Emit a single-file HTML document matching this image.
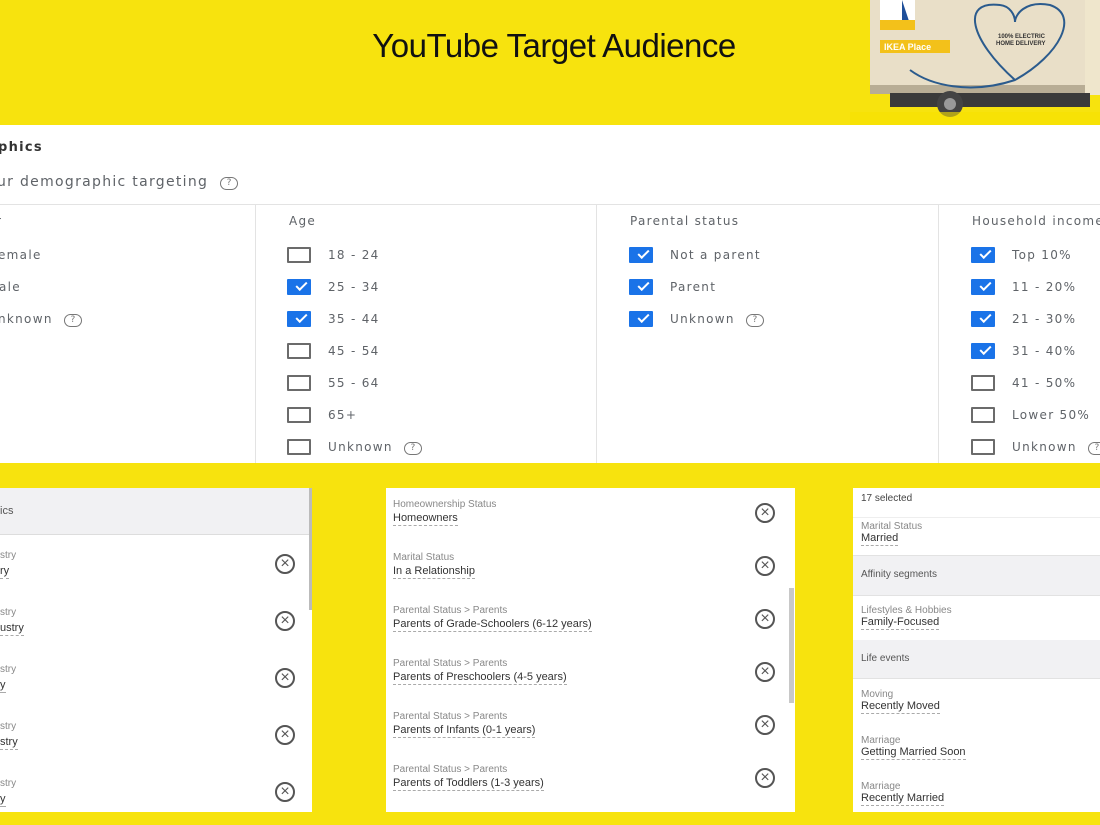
<!DOCTYPE html>
<html><head><style>
body{margin:0;width:1100px;height:825px;overflow:hidden;background:#f7e30e;font-family:"DejaVu Sans","Liberation Sans",sans-serif;position:relative}
.a{position:absolute}
.t{position:absolute;font-size:12px;color:#5f6368;letter-spacing:1.3px;white-space:nowrap}
.cb{position:absolute;width:24px;height:16px;border:2px solid #6b6b6b;border-radius:1px;box-sizing:border-box}
.cb.on{background:#1a73e8;border-color:#1a73e8}
.cb.on:after{content:"";position:absolute;left:7px;top:1px;width:9px;height:4px;border-left:2px solid #fff;border-bottom:2px solid #fff;transform:rotate(-45deg)}
.q{display:inline-block;width:16px;height:11px;border:1.5px solid #777;border-radius:7px;font-size:9px;line-height:11px;text-align:center;letter-spacing:0;vertical-align:1px;margin-left:6px;color:#777}
.s{position:absolute;font-family:"Liberation Sans",sans-serif;font-size:10px;color:#888;white-space:nowrap}
.v{position:absolute;font-family:"Liberation Sans",sans-serif;font-size:11px;color:#333;white-space:nowrap;border-bottom:1px dashed #aaa;padding-bottom:1px}
.x{position:absolute;width:16px;height:16px;border:2px solid #555;border-radius:50%;font-family:"Liberation Sans",sans-serif;font-size:16px;line-height:15px;text-align:center;color:#555}
.gr{position:absolute;background:#f1f1f3}
</style></head><body>
<div class="a" style="left:0;top:27px;width:1108px;text-align:center;font-family:'Liberation Sans',sans-serif;font-size:33px;color:#111;letter-spacing:-0.5px">YouTube Target Audience</div>
<!-- truck -->
<svg class="a" style="left:850px;top:0" width="250" height="125">
<rect x="20" y="0" width="230" height="93" fill="#e9dfc8"/>
<rect x="20" y="85" width="215" height="9" fill="#b8ad95"/>
<rect x="30" y="0" width="35" height="28" fill="#fff"/><path d="M52 0v20h-22l32 10z" fill="#1f4f99"/><path d="M30 20h35v10h-35z" fill="#f3c11a"/>
<rect x="30" y="40" width="70" height="13" fill="#f3c11a"/><text x="34" y="50" font-size="9" font-weight="bold" fill="#fff" font-family="Liberation Sans">IKEA Place</text>
<path d="M165 80 C120 40 110 0 150 5 C160 6 165 15 165 22 C165 15 175 0 200 5 C230 15 210 55 165 80 C120 95 80 85 60 70" fill="none" stroke="#2b5b8d" stroke-width="2"/>
<text x="148" y="38" font-size="6" font-weight="bold" fill="#333" font-family="Liberation Sans">100% ELECTRIC</text>
<text x="146" y="45" font-size="6" font-weight="bold" fill="#333" font-family="Liberation Sans">HOME DELIVERY</text>
<rect x="235" y="0" width="15" height="95" fill="#efe6cc"/>
<rect x="40" y="93" width="200" height="14" fill="#3a3a3a"/>
<circle cx="100" cy="104" r="13" fill="#444"/><circle cx="100" cy="104" r="6" fill="#999"/>
<rect x="0" y="112" width="250" height="13" fill="#f6e100" opacity=".6"/>
</svg>
<!-- main panel -->
<div class="a" style="left:0;top:125px;width:1100px;height:338px;background:#fff"></div>
<div class="a" style="left:0;top:204px;width:1100px;height:1px;background:#e3e3e3"></div>
<div class="a" style="left:255px;top:205px;width:1px;height:258px;background:#e3e3e3"></div>
<div class="a" style="left:596px;top:205px;width:1px;height:258px;background:#e3e3e3"></div>
<div class="a" style="left:938px;top:205px;width:1px;height:258px;background:#e3e3e3"></div>
<div class="t" style="left:-2px;top:140px;font-weight:bold;color:#333;font-size:13px">phics</div>
<div class="t" style="left:-3px;top:174px;font-size:14px">ur demographic targeting <span class="q">?</span></div>
<div class="t" style="left:-4px;top:214px">r</div>
<div class="t" style="left:-2px;top:248px">emale</div>
<div class="t" style="left:-1px;top:280px">ale</div>
<div class="t" style="left:-2px;top:312px">nknown <span class="q">?</span></div>
<div class="t" style="left:289px;top:214px">Age</div>
<div class="cb" style="left:287px;top:247px"></div><div class="t" style="left:328px;top:248px">18 - 24</div>
<div class="cb on" style="left:287px;top:279px"></div><div class="t" style="left:328px;top:280px">25 - 34</div>
<div class="cb on" style="left:287px;top:311px"></div><div class="t" style="left:328px;top:312px">35 - 44</div>
<div class="cb" style="left:287px;top:343px"></div><div class="t" style="left:328px;top:344px">45 - 54</div>
<div class="cb" style="left:287px;top:375px"></div><div class="t" style="left:328px;top:376px">55 - 64</div>
<div class="cb" style="left:287px;top:407px"></div><div class="t" style="left:328px;top:408px">65+</div>
<div class="cb" style="left:287px;top:439px"></div><div class="t" style="left:328px;top:440px">Unknown <span class="q">?</span></div>
<div class="t" style="left:630px;top:214px">Parental status</div>
<div class="cb on" style="left:629px;top:247px"></div><div class="t" style="left:670px;top:248px">Not a parent</div>
<div class="cb on" style="left:629px;top:279px"></div><div class="t" style="left:670px;top:280px">Parent</div>
<div class="cb on" style="left:629px;top:311px"></div><div class="t" style="left:670px;top:312px">Unknown <span class="q">?</span></div>
<div class="t" style="left:972px;top:214px">Household income</div>
<div class="cb on" style="left:971px;top:247px"></div><div class="t" style="left:1012px;top:248px">Top 10%</div>
<div class="cb on" style="left:971px;top:279px"></div><div class="t" style="left:1012px;top:280px">11 - 20%</div>
<div class="cb on" style="left:971px;top:311px"></div><div class="t" style="left:1012px;top:312px">21 - 30%</div>
<div class="cb on" style="left:971px;top:343px"></div><div class="t" style="left:1012px;top:344px">31 - 40%</div>
<div class="cb" style="left:971px;top:375px"></div><div class="t" style="left:1012px;top:376px">41 - 50%</div>
<div class="cb" style="left:971px;top:407px"></div><div class="t" style="left:1012px;top:408px">Lower 50%</div>
<div class="cb" style="left:971px;top:439px"></div><div class="t" style="left:1012px;top:440px">Unknown <span class="q">?</span></div>
<!-- bottom left -->
<div class="a" style="left:0;top:488px;width:312px;height:324px;background:#fff"></div>
<div class="gr" style="left:0;top:488px;width:309px;height:46px;border-bottom:1px solid #ddd"></div>
<div class="a" style="left:309px;top:488px;width:3px;height:122px;background:#bbb"></div>
<div class="s" style="left:0;top:505px;color:#555;font-size:11px">ics</div>
<div class="s" style="left:0;top:550px">stry</div><div class="v" style="left:0;top:565px">ry</div><div class="x" style="left:275px;top:554px">×</div>
<div class="s" style="left:0;top:607px">stry</div><div class="v" style="left:0;top:622px">ustry</div><div class="x" style="left:275px;top:611px">×</div>
<div class="s" style="left:0;top:664px">stry</div><div class="v" style="left:0;top:679px">y</div><div class="x" style="left:275px;top:668px">×</div>
<div class="s" style="left:0;top:721px">stry</div><div class="v" style="left:0;top:736px">stry</div><div class="x" style="left:275px;top:725px">×</div>
<div class="s" style="left:0;top:778px">stry</div><div class="v" style="left:0;top:793px">y</div><div class="x" style="left:275px;top:782px">×</div>
<!-- bottom middle -->
<div class="a" style="left:386px;top:488px;width:409px;height:324px;background:#fff"></div>
<div class="a" style="left:789px;top:588px;width:5px;height:115px;background:#c8c8c8"></div>
<div class="s" style="left:393px;top:499px">Homeownership Status</div><div class="v" style="left:393px;top:512px">Homeowners</div><div class="x" style="left:755px;top:503px">×</div>
<div class="s" style="left:393px;top:552px">Marital Status</div><div class="v" style="left:393px;top:565px">In a Relationship</div><div class="x" style="left:755px;top:556px">×</div>
<div class="s" style="left:393px;top:605px">Parental Status &gt; Parents</div><div class="v" style="left:393px;top:618px">Parents of Grade-Schoolers (6-12 years)</div><div class="x" style="left:755px;top:609px">×</div>
<div class="s" style="left:393px;top:658px">Parental Status &gt; Parents</div><div class="v" style="left:393px;top:671px">Parents of Preschoolers (4-5 years)</div><div class="x" style="left:755px;top:662px">×</div>
<div class="s" style="left:393px;top:711px">Parental Status &gt; Parents</div><div class="v" style="left:393px;top:724px">Parents of Infants (0-1 years)</div><div class="x" style="left:755px;top:715px">×</div>
<div class="s" style="left:393px;top:764px">Parental Status &gt; Parents</div><div class="v" style="left:393px;top:777px">Parents of Toddlers (1-3 years)</div><div class="x" style="left:755px;top:768px">×</div>
<!-- bottom right -->
<div class="a" style="left:853px;top:488px;width:247px;height:324px;background:#fff"></div>
<div class="s" style="left:861px;top:493px;color:#444">17 selected</div>
<div class="a" style="left:853px;top:517px;width:247px;height:1px;background:#eee"></div>
<div class="s" style="left:861px;top:521px">Marital Status</div><div class="v" style="left:861px;top:532px">Married</div>
<div class="gr" style="left:853px;top:555px;width:247px;height:39px;border-top:1px solid #e2e2e2;border-bottom:1px solid #e2e2e2"></div>
<div class="s" style="left:861px;top:569px;color:#555">Affinity segments</div>
<div class="s" style="left:861px;top:605px">Lifestyles &amp; Hobbies</div><div class="v" style="left:861px;top:616px">Family-Focused</div>
<div class="gr" style="left:853px;top:640px;width:247px;height:38px;border-bottom:1px solid #e2e2e2"></div>
<div class="s" style="left:861px;top:653px;color:#555">Life events</div>
<div class="s" style="left:861px;top:689px">Moving</div><div class="v" style="left:861px;top:700px">Recently Moved</div>
<div class="s" style="left:861px;top:735px">Marriage</div><div class="v" style="left:861px;top:746px">Getting Married Soon</div>
<div class="s" style="left:861px;top:781px">Marriage</div><div class="v" style="left:861px;top:792px">Recently Married</div>
</body></html>
